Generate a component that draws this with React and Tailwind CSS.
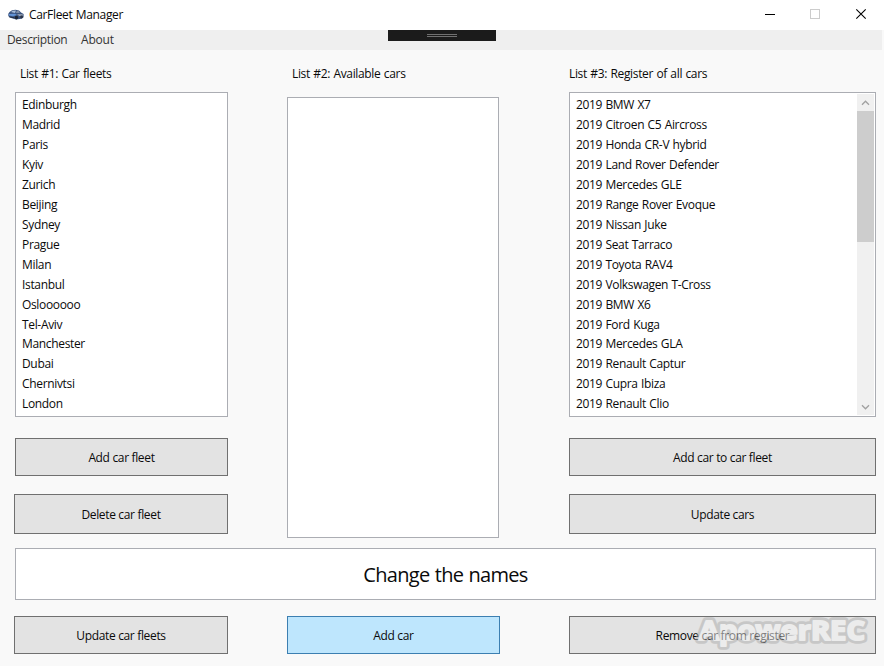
import React from "react";

const fleets = ["Edinburgh", "Madrid", "Paris", "Kyiv", "Zurich", "Beijing", "Sydney", "Prague", "Milan", "Istanbul", "Osloooooo", "Tel-Aviv", "Manchester", "Dubai", "Chernivtsi", "London"];
const cars = ["BMW X7", "Citroen C5 Aircross", "Honda CR-V hybrid", "Land Rover Defender", "Mercedes GLE", "Range Rover Evoque", "Nissan Juke", "Seat Tarraco", "Toyota RAV4", "Volkswagen T-Cross", "BMW X6", "Ford Kuga", "Mercedes GLA", "Renault Captur", "Cupra Ibiza", "Renault Clio"];

function Label({ children, className = "" }) {
  return <div className={`h-5 leading-5 whitespace-nowrap ${className}`}>{children}</div>;
}

function ListBox({ items, children, className = "" }) {
  return (
    <div className={`flex border border-[#abadb3] bg-white ${className}`}>
      <ul className="flex-1 pl-1.5 pt-[2.22px]">
        {items.map((t) => (
          <li key={t} className="h-[19.94px] leading-[19.94px] whitespace-nowrap">{t}</li>
        ))}
      </ul>
      {children}
    </div>
  );
}

function Button({ children, className = "" }) {
  return (
    <button className={`flex items-center justify-center border pt-px ${className}`}>
      {children}
    </button>
  );
}

const gray = "border-[#707070] bg-[#e3e3e3]";

function CarIcon() {
  return (
    <svg className="ml-2" width="16" height="12" viewBox="0 0 16 12">
      <path d="M.3 4.8 1.5 3 4 1.2 7.5.8 11 1.4 13 3.6 15.6 5 15.6 8.2 13.5 9.8 8 10.4 1.5 8.4.3 7Z" fill="#3b5480" />
      <path d="M3 3 4.8 1.8 8 1.5 7 4Z" fill="#a9bdd8" />
      <path d="M8 4 8.8 1.7 10.8 2.1 11.8 4Z" fill="#7f8ea6" />
      <path d="M.8 5 7 4.8 9 6 5 7.2 1 6.6Z" fill="#6293d6" />
      <path d="M9 5.2h5.5l.8 1.2-4 .6Z" fill="#a3abb8" />
      <path d="M1 7.4 6 8.2 6 9.3 1.6 8.3Z" fill="#222b3b" />
      <circle cx="8.4" cy="8.6" r="1.8" fill="#1d2533" />
      <circle cx="13.6" cy="8" r="1.4" fill="#2b3444" />
    </svg>
  );
}

export default function App() {
  return (
    <div className="relative flex h-[666px] w-[884px] flex-col overflow-hidden bg-[#f9f9f9] font-['Open_Sans','Noto_Sans',sans-serif] text-[12px] tracking-[-0.34px] [word-spacing:0.6px] text-[#0a0a0a]">
      <header className="flex h-[30px] items-center bg-white">
        <CarIcon />
        <span className="ml-[5px] flex-1">CarFleet Manager</span>
        <svg width="120" height="30" viewBox="0 0 120 30" fill="none" shapeRendering="crispEdges">
          <path d="M1 14.5h10" stroke="#000" />
          <path d="M46.5 9.5h9v9h-9z" stroke="#ccc" />
          <path d="M92.3 9.3l9.4 9.4M101.7 9.3l-9.4 9.4" stroke="#000" strokeWidth="1.1" shapeRendering="auto" />
        </svg>
      </header>
      <nav className="mr-[2px] flex h-5 items-center bg-[#efefef] pl-[7px] text-[#333]">
        <span className="w-[74px]">Description</span>
        <span className="tracking-[-0.2px]">About</span>
      </nav>
      <div className="absolute left-[388px] top-[30px] flex h-[11px] w-[108px] flex-col items-center gap-px bg-[#1b1b1b] pt-1">
        <i className="h-px w-[30px] bg-[#707070]" />
        <i className="h-px w-[30px] bg-[#707070]" />
      </div>

      <main className="flex h-[498px] pt-[14px]">
        <section className="flex w-[228px] flex-col pl-[14px]">
          <Label className="pl-1.5">List #1: Car fleets</Label>
          <ListBox items={fleets} className="ml-px mt-2 h-[325px]" />
          <Button className={`ml-px mt-[21px] h-[38px] ${gray}`}>Add car fleet</Button>
          <Button className={`mt-[18px] h-10 ${gray}`}>Delete car fleet</Button>
        </section>
        <section className="ml-[59px] w-[212px]">
          <Label className="pl-[5px]">List #2: Available cars</Label>
          <div className="mt-[13px] h-[441px] border border-[#abadb3] bg-white" />
        </section>
        <section className="ml-[70px] flex w-[307px] flex-col">
          <Label>List #3: Register of all cars</Label>
          <ListBox items={cars.map((c) => `2019 ${c}`)} className="mt-2 h-[325px]">
            <div className="my-px mr-px flex w-[17px] flex-col bg-[#f0f0f0]">
              <svg width="17" height="17" viewBox="0 0 17 17" fill="none" stroke="#a0a0a0" strokeWidth="1.3">
                <path d="M5 10.8 8.5 7.2 12 10.8" />
              </svg>
              <div className="h-[131px] bg-[#cdcdcd]" />
              <svg className="mt-auto" width="17" height="17" viewBox="0 0 17 17" fill="none" stroke="#a0a0a0" strokeWidth="1.3">
                <path d="M5 7.2 8.5 10.8 12 7.2" />
              </svg>
            </div>
          </ListBox>
          <Button className={`mt-[21px] h-[38px] ${gray}`}>Add car to car fleet</Button>
          <Button className={`mt-[18px] h-10 ${gray}`}>Update cars</Button>
        </section>
      </main>

      <div className="ml-[15px] flex h-[52px] w-[861px] items-center justify-center border border-[#abadb3] bg-white pt-[2px] text-[20px] tracking-[-0.68px]">
        Change the names
      </div>
      <footer className="mt-4 flex h-[38px] pl-[14px]">
        <Button className={`w-[214px] ${gray}`}>Update car fleets</Button>
        <Button className="ml-[59px] w-[213px] border-[#3c7fb1] bg-[#bee6fd]">Add car</Button>
        <Button className={`ml-[69px] w-[307px] ${gray}`}>Remove car from register</Button>
      </footer>

      <svg className="absolute left-[688px] top-[608px] opacity-50" width="188" height="46" viewBox="0 0 188 46">
        <text x="11" y="31.5" textLength="166" lengthAdjust="spacingAndGlyphs" fontSize="27.5" fontWeight="700" letterSpacing="0" stroke="#adadad" strokeWidth="7.5" strokeLinejoin="round" fill="#adadad">ApowerREC</text>
        <text x="11" y="31.5" textLength="166" lengthAdjust="spacingAndGlyphs" fontSize="27.5" fontWeight="700" letterSpacing="0" stroke="#f5f5f5" strokeWidth="2" strokeLinejoin="round" fill="#f5f5f5" aria-hidden="true">ApowerREC</text>
      </svg>
    </div>
  );
}
